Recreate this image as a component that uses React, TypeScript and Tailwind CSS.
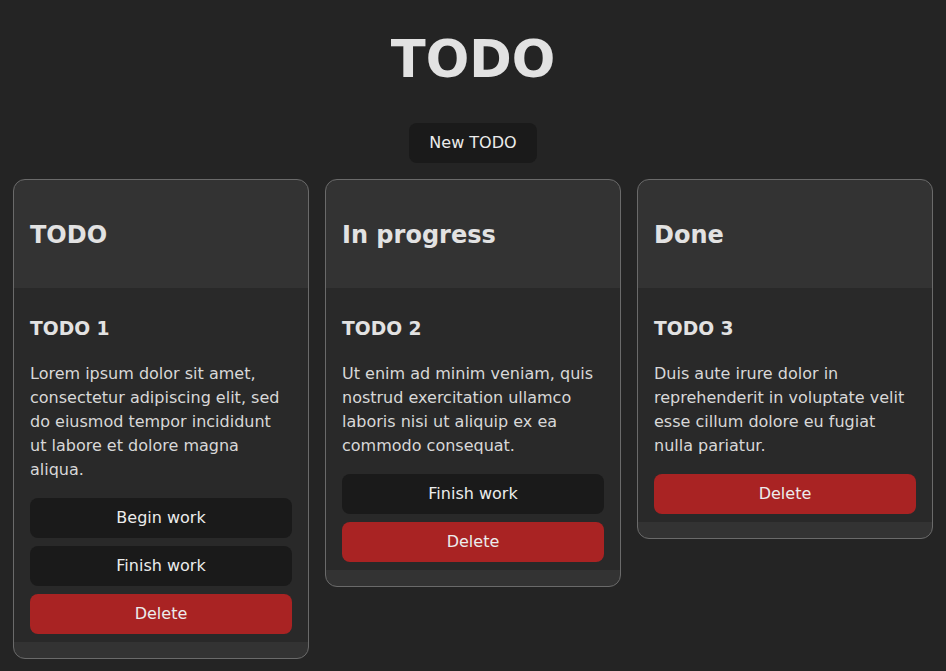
import React from 'react'

type Todo = { id: number; title: string; text: string; status: 'todo' | 'progress' | 'done' }

const todos: Todo[] = [
  {
    id: 1,
    title: 'TODO 1',
    text: 'Lorem ipsum dolor sit amet, consectetur adipiscing elit, sed do eiusmod tempor incididunt ut labore et dolore magna aliqua.',
    status: 'todo',
  },
  {
    id: 2,
    title: 'TODO 2',
    text: 'Ut enim ad minim veniam, quis nostrud exercitation ullamco laboris nisi ut aliquip ex ea commodo consequat.',
    status: 'progress',
  },
  {
    id: 3,
    title: 'TODO 3',
    text: 'Duis aute irure dolor in reprehenderit in voluptate velit esse cillum dolore eu fugiat nulla pariatur.',
    status: 'done',
  },
]

const columns: { key: Todo['status']; label: string }[] = [
  { key: 'todo', label: 'TODO' },
  { key: 'progress', label: 'In progress' },
  { key: 'done', label: 'Done' },
]

// ── Buttons ───────────────────────────────────────────────────────────────

function Btn({ children, danger }: { children: React.ReactNode; danger?: boolean }) {
  return (
    <button
      className={
        danger
          ? 'w-full h-10 rounded-lg bg-[#a92323] text-[#ececec] text-base leading-normal'
          : 'w-full h-10 rounded-lg bg-[#1a1a1a] text-[#ececec] text-base leading-normal'
      }
    >
      {children}
    </button>
  )
}

// ── Card ──────────────────────────────────────────────────────────────────

function TodoItem({ todo }: { todo: Todo }) {
  return (
    <div className="px-4 pt-2 pb-2 bg-[#292929]">
      <h3 className="text-[18.72px] font-bold leading-[28px] mt-[18.72px] mb-[19.5px]">{todo.title}</h3>
      <p className="text-base leading-6 text-[#d8d8d8] mb-4">{todo.text}</p>
      <div className="flex flex-col gap-2">
        {todo.status === 'todo' && <Btn>Begin work</Btn>}
        {todo.status !== 'done' && <Btn>Finish work</Btn>}
        <Btn danger>Delete</Btn>
      </div>
    </div>
  )
}

function Column({ label, items }: { label: string; items: Todo[] }) {
  return (
    <div className="rounded-xl border border-[#6a6a6a] overflow-hidden bg-[#333333]">
      <div className="px-4 py-4">
        <h2 className="text-2xl font-bold leading-9 mt-[20.8px] mb-[19px]">{label}</h2>
      </div>
      {items.map((t) => (
        <TodoItem key={t.id} todo={t} />
      ))}
      <div className="h-4" />
    </div>
  )
}

// ── App ───────────────────────────────────────────────────────────────────

export default function App() {
  return (
    <div
      className="min-h-screen bg-[#242424] text-[#e2e2e2]"
      style={{ fontFamily: '"DejaVu Sans", sans-serif' }}
    >
      <h1 className="text-[51.2px] font-bold leading-[56px] pt-[31px] text-center">TODO</h1>
      <div className="flex justify-center mt-9">
        <button className="h-10 px-5 rounded-lg bg-[#1a1a1a] text-[#ececec] text-base leading-normal">
          New TODO
        </button>
      </div>
      <div className="grid grid-cols-3 gap-4 px-[13px] mt-4 items-start">
        {columns.map((c) => (
          <Column key={c.key} label={c.label} items={todos.filter((t) => t.status === c.key)} />
        ))}
      </div>
    </div>
  )
}
